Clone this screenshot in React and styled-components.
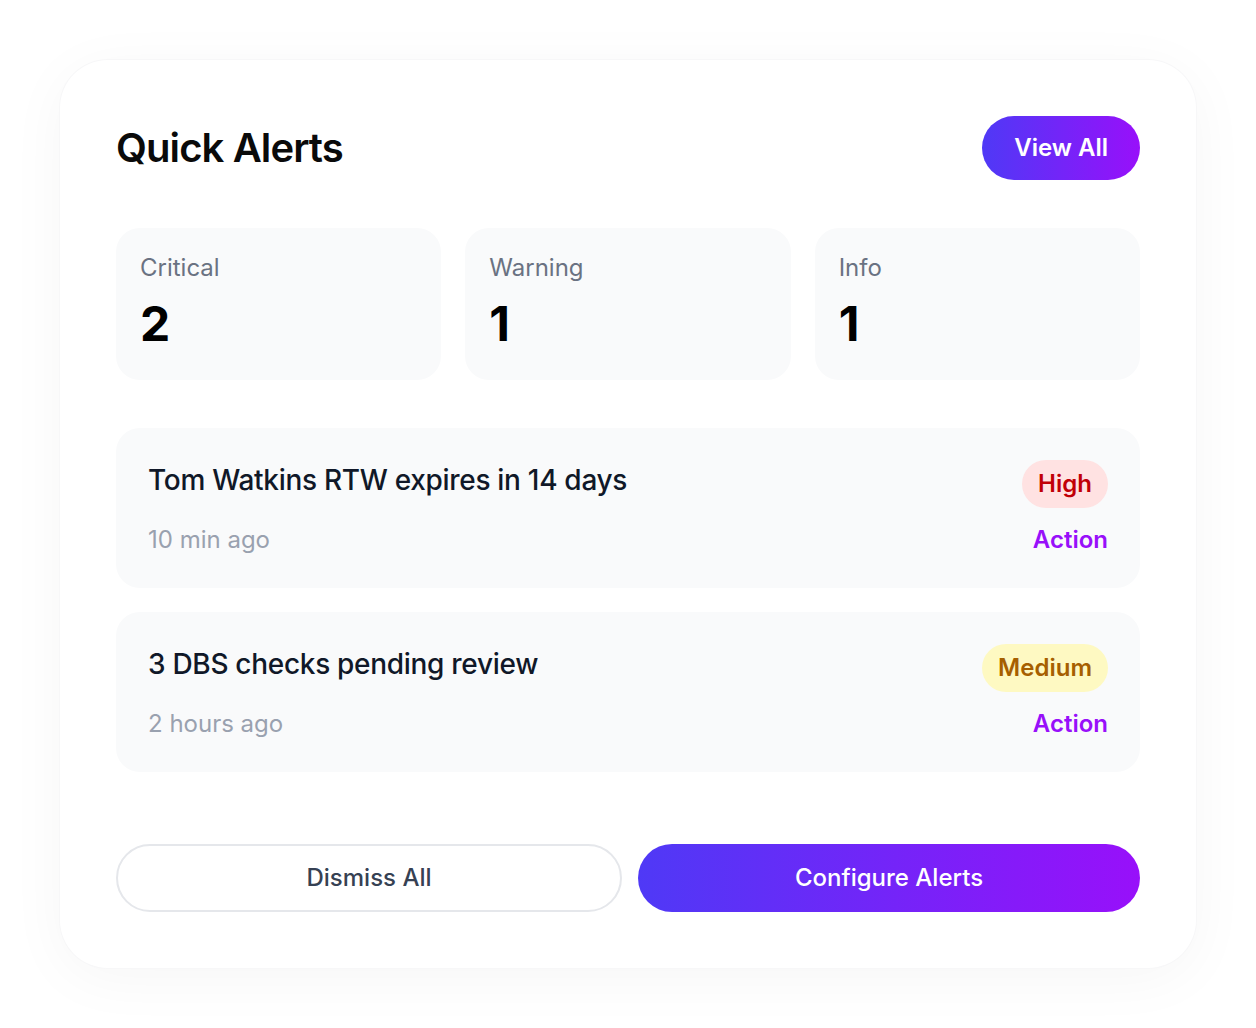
import React from "react";
import styled, { createGlobalStyle } from "styled-components";

const GlobalStyle = createGlobalStyle`
  * { box-sizing: border-box; }
  body {
    margin: 0;
    background: #ffffff;
    font-family: Inter, "Noto Sans", "Liberation Sans", sans-serif;
  }
  #root { padding: 60px; }
`;

const stats = [
  { label: "Critical", value: 2 },
  { label: "Warning", value: 1 },
  { label: "Info", value: 1 },
];

const alerts = [
  { title: "Tom Watkins RTW expires in 14 days", time: "10 min ago", level: "high", tag: "High" },
  { title: "3 DBS checks pending review", time: "2 hours ago", level: "medium", tag: "Medium" },
];

const badgeColors = {
  high: { bg: "#ffe2e2", fg: "#c10007" },
  medium: { bg: "#fef9c2", fg: "#a65f00" },
};

const App = () => {
  return (
    <>
      <GlobalStyle />
      <Card>
        <Header>
          <Title>Quick Alerts</Title>
          <GradientButton $small>View All</GradientButton>
        </Header>

        <StatGrid>
          {stats.map((s) => (
            <StatCard key={s.label}>
              <StatLabel>{s.label}</StatLabel>
              <StatValue>{s.value}</StatValue>
            </StatCard>
          ))}
        </StatGrid>

        <AlertList>
          {alerts.map((a) => (
            <AlertRow key={a.title}>
              <AlertText>
                <AlertTitle>{a.title}</AlertTitle>
                <AlertTime>{a.time}</AlertTime>
              </AlertText>
              <AlertSide>
                <Badge $level={a.level}>{a.tag}</Badge>
                <ActionLink>Action</ActionLink>
              </AlertSide>
            </AlertRow>
          ))}
        </AlertList>

        <Footer>
          <OutlineButton>Dismiss All</OutlineButton>
          <GradientButton>Configure Alerts</GradientButton>
        </Footer>
      </Card>
    </>
  );
};

const Card = styled.div`
  width: 1136px;
  background: #ffffff;
  border-radius: 48px;
  padding: 56px;
  box-shadow: 0 0 0 1px #f7f7f8, 0 10px 60px rgba(0, 0, 0, 0.04);
`;

const Header = styled.div`
  display: flex;
  align-items: center;
  justify-content: space-between;
  margin-bottom: 48px;
`;

const Title = styled.h1`
  margin: 0;
  font-size: 40px;
  line-height: 48px;
  font-weight: 600;
  color: #0a0a0a;
  letter-spacing: -0.9px;
`;

const GradientButton = styled.button`
  border: none;
  cursor: pointer;
  font-family: inherit;
  font-size: 24px;
  line-height: 32px;
  font-weight: ${({ $small }) => ($small ? 600 : 500)};
  color: #ffffff;
  background: linear-gradient(to right, #4f39f6, #9810fa);
  border-radius: 999px;
  padding: ${({ $small }) => ($small ? "16px 32px" : "18px 32px")};
  flex: ${({ $small }) => ($small ? "none" : "1")};
`;

const StatGrid = styled.div`
  display: grid;
  grid-template-columns: repeat(3, 1fr);
  gap: 24px;
  margin-bottom: 48px;
`;

const StatCard = styled.div`
  background: #f9fafb;
  border-radius: 24px;
  padding: 24px;
`;

const StatLabel = styled.div`
  font-size: 24px;
  line-height: 32px;
  color: #6a7282;
`;

const StatValue = styled.div`
  margin-top: 8px;
  font-size: 48px;
  line-height: 64px;
  font-weight: 700;
  color: #000000;
`;

const AlertList = styled.div`
  display: flex;
  flex-direction: column;
  gap: 24px;
`;

const AlertRow = styled.div`
  display: flex;
  justify-content: space-between;
  background: #f9fafb;
  border-radius: 24px;
  padding: 32px;
`;

const AlertText = styled.div`
  display: flex;
  flex-direction: column;
`;

const AlertTitle = styled.div`
  font-size: 28px;
  line-height: 40px;
  font-weight: 500;
  color: #101828;
  letter-spacing: -0.3px;
`;

const AlertTime = styled.div`
  margin-top: 24px;
  font-size: 24px;
  line-height: 32px;
  color: #99a1af;
`;

const AlertSide = styled.div`
  display: flex;
  flex-direction: column;
  align-items: flex-end;
  justify-content: space-between;
`;

const Badge = styled.span`
  font-size: 24px;
  line-height: 32px;
  font-weight: 600;
  padding: 8px 16px;
  border-radius: 999px;
  background: ${({ $level }) => badgeColors[$level].bg};
  color: ${({ $level }) => badgeColors[$level].fg};
`;

const ActionLink = styled.a`
  font-size: 24px;
  line-height: 32px;
  font-weight: 600;
  color: #9810fa;
  cursor: pointer;
`;

const Footer = styled.div`
  display: flex;
  gap: 16px;
  margin-top: 72px;
`;

const OutlineButton = styled.button`
  flex: 1;
  cursor: pointer;
  font-family: inherit;
  font-size: 24px;
  line-height: 32px;
  font-weight: 500;
  color: #364153;
  background: #ffffff;
  border: 2px solid #e5e7eb;
  border-radius: 999px;
  padding: 16px 32px;
`;

export default App;
